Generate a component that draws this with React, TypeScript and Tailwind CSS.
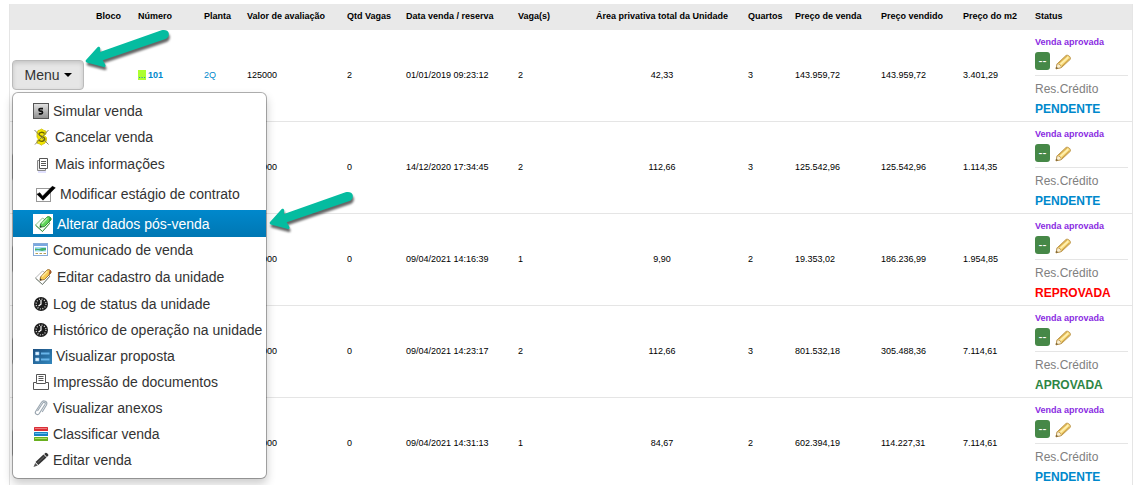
import type { ReactNode } from 'react';

const CalculatorIcon = () => (
  <svg width="16" height="16" viewBox="0 0 16 16" aria-hidden="true">
    <defs>
      <linearGradient id="steel" x1="0" y1="0" x2="0" y2="1">
        <stop offset="0" stopColor="#e4e4e4" />
        <stop offset="1" stopColor="#8f8f8f" />
      </linearGradient>
    </defs>
    <rect x="0.5" y="0.5" width="15" height="15" fill="url(#steel)" stroke="#555" />
    <path d="M10 5.6H7.2c-1.6 0-1.6 2.5 0 2.6h1c1.7.1 1.7 2.7 0 2.7H5.8" fill="none" stroke="#111" strokeWidth="1.7" />
  </svg>
);

const CancelIcon = () => (
  <svg width="18" height="18" viewBox="0 0 18 18" aria-hidden="true">
    <path d="M8.500 1l2 1.200 2.500 1v3l-2 1 2.500 2.500v3l-2 2.800-2 .8-1 1-1.500-1.200-3-1V12.500l1.500-1L4 9V5l1-2.500 2-.5z" fill="#f2e500" stroke="#c9bd00" strokeWidth="0.800" />
    <path d="M11.500 5.500C10 3.500 6 4 6 6.200c0 2.300 5.800 2 5.800 4.800 0 2.700-4.500 3-6.300.9" fill="none" stroke="#6b6500" strokeWidth="1.300" />
    <path d="M1.500 2l14 14.500M15.500 2L2 16.500" stroke="#77735c" strokeWidth="0.900" />
  </svg>
);

const PagesIcon = () => (
  <svg width="18" height="20" viewBox="0 0 18 20" aria-hidden="true">
    <path d="M6.500 6.500h-2v10h8v-2" fill="#eee" stroke="#888" />
    <path d="M6.500 4.500h8v10h-8z" fill="#fff" stroke="#555" />
    <path d="M8 7.500h5M8 9.500h5M8 11.500h5" stroke="#444" strokeWidth="0.900" />
    <path d="M5 18h8" stroke="#c4c4ff" />
  </svg>
);

const CheckIcon = () => (
  <svg width="23" height="18" viewBox="0 0 23 18" aria-hidden="true">
    <rect x="3.500" y="3.500" width="14" height="13" fill="#fff" stroke="#999" />
    <path d="M4 9.200l2.800-1.500 2.700 3.500L19.300 1.300l3 1.500L10 15.200z" fill="#000" stroke="#000" strokeWidth="0.600" />
  </svg>
);

const NotebookIcon = ({ green = false }: { green?: boolean }) => (
  <svg width="20" height="20" viewBox="0 0 20 20" aria-hidden="true">
    {green && <path d="M0 0h20v20H0z" fill="#fff" />}
    <path d="M2.500 11L9.500 4l7.500 5-7.500 8.500z" fill={green ? '#f4fff1' : '#fff'} stroke={green ? '#77b871' : '#a2a2a2'} strokeWidth="0.800" />
    <path d="M2.500 11.300l7 6.200 7.300-8.300" fill="none" stroke={green ? '#3a8f3c' : '#6f7a6f'} strokeWidth="0.900" />
    <path d="M7.500 10l6-6.500c1.500-2 5.300-.5 4.500 2.500l-6.500 6.500-4.500.8z" fill={green ? '#5fd458' : '#f7cb55'} stroke={green ? '#1e7a24' : '#8c5a1b'} strokeWidth="0.800" />
    <path d="M15.500 8l2.500-2.500c.5-1.200-.2-2.300-1.200-2.800z" fill={green ? '#2f9d35' : '#a4522a'} />
    <path d="M9 9.700l5.300-5.500" stroke={green ? '#b7f2ae' : '#ffeaa3'} strokeWidth="1.300" />
    <path d="M6.700 13.500l.7-2.200 1.500 1.700z" fill="#333" />
  </svg>
);

const WindowIcon = () => (
  <svg width="16" height="14" viewBox="0 0 16 14" aria-hidden="true">
    <rect x="0.500" y="0.500" width="14" height="12" fill="#fff" stroke="#86abd8" />
    <path d="M1 1h13v2H1z" fill="#7aa7e0" />
    <path d="M2 4h11v4.500H2z" fill="#a3dcf6" />
    <path d="M2 5.500l4 .5 3-1 4 0v2l-4 1-4-1-3 .5z" fill="#43ae6b" />
    <path d="M2.500 10.500h2.500M6.500 10.500h2.500M10.500 10.500h2.500" stroke="#b59f57" />
  </svg>
);

const ClockIcon = () => (
  <svg width="16" height="16" viewBox="0 0 16 16" aria-hidden="true">
    <circle cx="8" cy="8" r="7" fill="#1c1c1c" />
    <circle cx="8" cy="8" r="4.900" fill="none" stroke="#ddd" strokeWidth="1.300" strokeDasharray="1 1.560" />
    <path d="M8 4v4.300L5.500 10" fill="none" stroke="#fff" strokeWidth="1.200" />
  </svg>
);

const ProposalIcon = () => (
  <svg width="19" height="15" viewBox="0 0 19 15" aria-hidden="true">
    <defs>
      <linearGradient id="proposal" x1="0" y1="0" x2="1" y2="1">
        <stop offset="0" stopColor="#1c4f80" />
        <stop offset="1" stopColor="#3287bd" />
      </linearGradient>
    </defs>
    <path d="M0 0h19v15H0z" fill="url(#proposal)" />
    <path d="M2.500 3h3.500v3H2.500zM2.500 9h3.500v3H2.500z" fill="#e6f4ff" stroke="#8fc5ec" strokeWidth="0.600" />
    <path d="M8 4.500h8.500M8 10.500h8.500" stroke="#69b5ea" strokeWidth="2" />
  </svg>
);

const PrinterIcon = () => (
  <svg width="16" height="16" viewBox="0 0 16 16" fill="#fff" stroke="#555" aria-hidden="true">
    <path d="M3.500 8.500v-8h9v8" />
    <path d="M5.500 2.500h5M5.500 4.500h5M5.500 6.500h5" />
    <path d="M0.500 8.500h3v1h9v-1h3v7h-15z" />
  </svg>
);

const ClipIcon = () => (
  <svg width="16" height="18" viewBox="0 0 16 18" fill="none" aria-hidden="true">
    <path d="M4.500 12l5.300-8c1-1.500 3.200-.3 2.300 1.300L6.300 14.500c-1.500 2.300-5 .5-3.700-2L8.500 3.200c2-2.800 6.600-.4 5 2.800l-4.300 7" stroke="#9aa6b0" strokeWidth="1.100" />
  </svg>
);

const LayersIcon = () => (
  <svg width="16" height="16" viewBox="0 0 16 16" aria-hidden="true">
    <rect x="1" y="1" width="14" height="4" rx="0.500" fill="#d92f37" />
    <rect x="1" y="6" width="14" height="4" rx="0.500" fill="#1683c5" />
    <rect x="1" y="11" width="14" height="4" rx="0.500" fill="#69b01e" />
    <path d="M2 2.500h12" stroke="#f0777b" />
    <path d="M2 7.500h12" stroke="#67bdea" />
    <path d="M2 12.500h12" stroke="#abe063" />
  </svg>
);

const PencilIcon = () => (
  <svg width="16" height="16" viewBox="0 0 16 16" aria-hidden="true">
    <path d="M0.500 15l1.700-4L4.800 13.500z" fill="#555" />
    <path d="M2.500 10l8-7.500 3 3L5.300 13z" fill="#333" />
    <path d="M11.200 2l1.500-1.300c1.300 0 2.900 1.500 2.700 2.700L13.900 5z" fill="#333" />
    <path d="M4.500 10.800l7-6.500" stroke="#777" strokeWidth="0.800" />
  </svg>
);

const YellowPencilIcon = () => (
  <svg width="17" height="16" viewBox="0 0 17 16" aria-hidden="true">
    <path d="M1 14.800l1.200-5L11 1.500c2-1.200 5.200 1.600 4.300 3.800L6.500 13.500z" fill="#f6d777" stroke="#b58d43" strokeWidth="0.900" />
    <path d="M2.200 9.800c2.200 0 3.900 1.500 4.300 3.700L1 14.800z" fill="#fbf0d2" stroke="#b58d43" strokeWidth="0.700" />
    <path d="M4 9l8-7.200M7 12l7.500-7.200" stroke="#c6983c" strokeWidth="0.800" />
    <path d="M5.500 10.300l7.800-7.200" stroke="#fff1b5" strokeWidth="1.500" />
    <path d="M1 14.800l.5-2 1.600 1.500z" fill="#5c4a26" />
  </svg>
);

const Arrow = () => (
  <svg width="90" height="46" viewBox="0 0 90 46" aria-hidden="true" className="drop-shadow-[1px_3px_1px_rgba(0,0,0,0.6)]">
    <path
      d="M2 32L13.500 19.300c1-1 2.700-.2 2.800 1.200l-.3 3.500L77.500 2.300c3.500-1 6.700.2 7.200 2.800s-.5 5-3.200 6L18.700 32.300l2.500 4.200c.8 1.500 0 2.800-1.500 2.600L3.500 34.700C2 34.300 1 33.200 2 32z"
      fill="#05bca0"
    />
  </svg>
);

type MenuItem = { label: string; icon: ReactNode; height: string; active?: boolean };

const menuItems: MenuItem[] = [
  { label: 'Simular venda', icon: <CalculatorIcon />, height: 'h-[26px]' },
  { label: 'Cancelar venda', icon: <CancelIcon />, height: 'h-[26px]' },
  { label: 'Mais informações', icon: <PagesIcon />, height: 'h-[28px]' },
  { label: 'Modificar estágio de contrato', icon: <CheckIcon />, height: 'h-[32px]' },
  { label: 'Alterar dados pós-venda', icon: <NotebookIcon green />, height: 'h-[27px]', active: true },
  { label: 'Comunicado de venda', icon: <WindowIcon />, height: 'h-[26px]' },
  { label: 'Editar cadastro da unidade', icon: <NotebookIcon />, height: 'h-[28px]' },
  { label: 'Log de status da unidade', icon: <ClockIcon />, height: 'h-[26px]' },
  { label: 'Histórico de operação na unidade', icon: <ClockIcon />, height: 'h-[26px]' },
  { label: 'Visualizar proposta', icon: <ProposalIcon />, height: 'h-[26px]' },
  { label: 'Impressão de documentos', icon: <PrinterIcon />, height: 'h-[26px]' },
  { label: 'Visualizar anexos', icon: <ClipIcon />, height: 'h-[26px]' },
  { label: 'Classificar venda', icon: <LayersIcon />, height: 'h-[26px]' },
  { label: 'Editar venda', icon: <PencilIcon />, height: 'h-[26px]' },
];

const columns = [
  { title: '', width: 'w-[82px]' },
  { title: 'Bloco', width: 'w-[42px]' },
  { title: 'Número', width: 'w-[66px]' },
  { title: 'Planta', width: 'w-[43px]' },
  { title: 'Valor de avaliação', width: 'w-[100px]' },
  { title: 'Qtd Vagas', width: 'w-[59px]' },
  { title: 'Data venda / reserva', width: 'w-[112px]' },
  { title: 'Vaga(s)', width: 'w-[66px]' },
  { title: 'Área privativa total da Unidade', width: 'w-[164px]', center: true },
  { title: 'Quartos', width: 'w-[47px]' },
  { title: 'Preço de venda', width: 'w-[86px]' },
  { title: 'Preço vendido', width: 'w-[82px]' },
  { title: 'Preço do m2', width: 'w-[72px]' },
  { title: 'Status', width: 'w-[101px]' },
];

const rows = [
  { numero: '101', planta: '2Q', valor: '125000', qtd: '2', data: '01/01/2019 09:23:12', vagas: '2', area: '42,33', quartos: '3', venda: '143.959,72', vendido: '143.959,72', m2: '3.401,29', credito: 'PENDENTE' },
  { valor: '125000', qtd: '0', data: '14/12/2020 17:34:45', vagas: '2', area: '112,66', quartos: '3', venda: '125.542,96', vendido: '125.542,96', m2: '1.114,35', credito: 'PENDENTE' },
  { valor: '125000', qtd: '0', data: '09/04/2021 14:16:39', vagas: '1', area: '9,90', quartos: '2', venda: '19.353,02', vendido: '186.236,99', m2: '1.954,85', credito: 'REPROVADA' },
  { valor: '125000', qtd: '0', data: '09/04/2021 14:23:17', vagas: '2', area: '112,66', quartos: '3', venda: '801.532,18', vendido: '305.488,36', m2: '7.114,61', credito: 'APROVADA' },
  { valor: '125000', qtd: '0', data: '09/04/2021 14:31:13', vagas: '1', area: '84,67', quartos: '2', venda: '602.394,19', vendido: '114.227,31', m2: '7.114,61', credito: 'PENDENTE' },
];

const creditColors: Record<string, string> = {
  PENDENTE: 'text-[#0088cc]',
  REPROVADA: 'text-[#ff0000]',
  APROVADA: 'text-[#2d8544]',
};

function DropdownMenu() {
  return (
    <ul className="absolute left-0 top-full z-10 mt-0.5 w-[255px] rounded-md border border-black/30 bg-white bg-clip-padding py-[5px] shadow-[0_5px_10px_rgba(0,0,0,0.2)]">
      {menuItems.map((item) => (
        <li key={item.label} className="relative">
          <a
            href="#"
            className={`flex items-center gap-1 whitespace-nowrap pl-5 text-sm ${item.height} ${
              item.active ? 'bg-gradient-to-b from-[#0088cc] to-[#0077b3] text-white' : 'text-[#333]'
            }`}
          >
            {item.icon}
            {item.label}
          </a>
          {item.active && (
            <div className="pointer-events-none absolute -top-5 left-full ml-0.5">
              <Arrow />
            </div>
          )}
        </li>
      ))}
    </ul>
  );
}

function MenuButton({ open = false }: { open?: boolean }) {
  return (
    <div className="relative w-[72px]">
      <button
        type="button"
        aria-label="Menu"
        aria-expanded={open}
        className={`flex h-[30px] w-full items-center justify-center gap-1 rounded border border-[#bbb] text-sm text-[#333] ${
          open ? 'bg-[#e6e6e6] shadow-[inset_0_2px_4px_rgba(0,0,0,0.15)]' : 'bg-[#f5f5f5]'
        }`}
      >
        {open && 'Menu'}
        <svg width="8" height="4" viewBox="0 0 8 4" aria-hidden="true">
          <path d="M0 0h8L4 4z" fill="#000" />
        </svg>
      </button>
      {open && <DropdownMenu />}
      {open && (
        <div className="pointer-events-none absolute -top-8 left-full">
          <Arrow />
        </div>
      )}
    </div>
  );
}

function StatusCell({ credito }: { credito: string }) {
  return (
    <div className="py-0.5">
      <p className="h-5 font-bold leading-5 text-[#8a2be2]">Venda aprovada</p>
      <div className="flex h-[24px] items-start gap-[5px] border-b border-[#e5e5e5]">
        <button type="button" className="h-[18px] w-[15px] rounded-[3px] bg-[#468847] text-xs leading-[18px] text-white">
          --
        </button>
        <a href="#" aria-label="Editar status" className="pt-0.5">
          <YellowPencilIcon />
        </a>
      </div>
      <p className="mt-[3px] text-xs leading-5 text-[#808080]">Res.Crédito</p>
      <p className={`text-xs font-bold leading-5 ${creditColors[credito]}`}>{credito}</p>
    </div>
  );
}

export default function App() {
  return (
    <div className="h-screen overflow-hidden bg-white pl-[9px] pr-[7px] pt-1 font-['Liberation_Sans',Arial,sans-serif]">
      <table className="w-full table-fixed border-separate border-spacing-0 border-x border-[#e5e5e5] text-[9px] text-black">
        <thead>
          <tr className="h-[26px] bg-[#e9e9e9]">
            {columns.map((col) => (
              <th
                key={col.title}
                scope="col"
                className={`whitespace-nowrap px-1 py-0 font-bold ${col.width} ${col.center ? 'text-center' : 'text-left'}`}
              >
                {col.title}
              </th>
            ))}
          </tr>
        </thead>
        <tbody className="[&_td]:border-b [&_td]:border-[#e5e5e5] [&_td]:px-1 [&_td]:py-0">
          {rows.map((row, i) => (
            <tr key={row.data}>
              <td>
                <div className="-ml-0.5 pb-px">
                  <MenuButton open={i === 0} />
                </div>
              </td>
              <td></td>
              <td>
                {row.numero && (
                  <a href="#" className="text-[#0088cc]">
                    <span className="bg-[#adff2f]">...</span> <b>{row.numero}</b>
                  </a>
                )}
              </td>
              <td>
                {row.planta && (
                  <a href="#" className="text-[#0088cc]">
                    {row.planta}
                  </a>
                )}
              </td>
              <td>{row.valor}</td>
              <td>{row.qtd}</td>
              <td className="whitespace-nowrap">{row.data}</td>
              <td>{row.vagas}</td>
              <td className="text-center">{row.area}</td>
              <td>{row.quartos}</td>
              <td>{row.venda}</td>
              <td>{row.vendido}</td>
              <td>{row.m2}</td>
              <td>
                <StatusCell credito={row.credito} />
              </td>
            </tr>
          ))}
        </tbody>
      </table>
    </div>
  );
}
